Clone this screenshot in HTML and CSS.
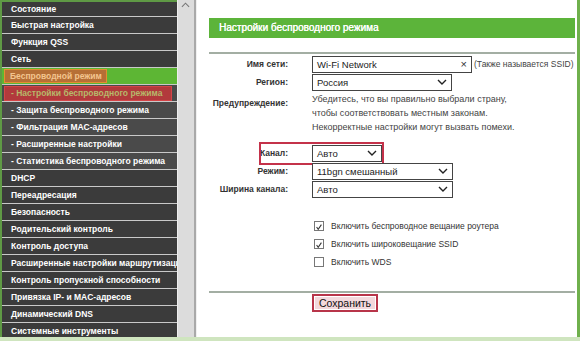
FILE: index.html
```html
<!DOCTYPE html>
<html lang="ru">
<head>
<meta charset="utf-8">
<link rel="stylesheet" href="styles.css">
</head>
<body>
<div class="page">
  <nav class="sidebar">
    <div class="item">Состояние</div>
    <div class="item">Быстрая настройка</div>
    <div class="item">Функция QSS</div>
    <div class="item">Сеть</div>
    <div class="item active"><span class="mark-orange">Беспроводной режим</span></div>
    <div class="item sub current"><span class="mark-red">- Настройки беспроводного режима</span></div>
    <div class="item sub">- Защита беспроводного режима</div>
    <div class="item sub">- Фильтрация MAC-адресов</div>
    <div class="item sub">- Расширенные настройки</div>
    <div class="item sub">- Статистика беспроводного режима</div>
    <div class="item">DHCP</div>
    <div class="item">Переадресация</div>
    <div class="item">Безопасность</div>
    <div class="item">Родительский контроль</div>
    <div class="item">Контроль доступа</div>
    <div class="item">Расширенные настройки маршрутизации</div>
    <div class="item">Контроль пропускной способности</div>
    <div class="item">Привязка IP- и MAC-адресов</div>
    <div class="item">Динамический DNS</div>
    <div class="item">Системные инструменты</div>
  </nav>
  <div class="scroll"><svg class="arrow" viewBox="0 0 10 6"><path d="M1 5l4-4 4 4" fill="none" stroke="#777" stroke-width="1.2"/></svg></div>
  <main class="content">
    <h1 class="title">Настройки беспроводного режима</h1>
    <div class="rule"></div>
    <div class="form">
      <div class="row">
        <label class="lbl">Имя сети:</label>
        <div class="ctl">
          <div class="input wide"><span>Wi-Fi Network</span><span class="x">×</span></div>
          <span class="note">(Также называется SSID)</span>
        </div>
      </div>
      <div class="row">
        <label class="lbl">Регион:</label>
        <div class="ctl"><div class="select s140"><span>Россия</span><svg class="chev" viewBox="0 0 10 6"><path d="M1 1l4 4 4-4" fill="none" stroke="#222" stroke-width="1.4"/></svg></div></div>
      </div>
      <div class="row warn">
        <label class="lbl">Предупреждение:</label>
        <div class="ctl warntext">Убедитесь, что вы правильно выбрали страну,<br>чтобы соответствовать местным законам.<br>Некорректные настройки могут вызвать помехи.</div>
      </div>
      <div class="row chan">
        <label class="lbl">Канал:</label>
        <div class="ctl"><div class="select s70"><span>Авто</span><svg class="chev" viewBox="0 0 10 6"><path d="M1 1l4 4 4-4" fill="none" stroke="#222" stroke-width="1.4"/></svg></div></div>
        <div class="hl"></div>
      </div>
      <div class="row">
        <label class="lbl">Режим:</label>
        <div class="ctl"><div class="select s141"><span>11bgn смешанный</span><svg class="chev" viewBox="0 0 10 6"><path d="M1 1l4 4 4-4" fill="none" stroke="#222" stroke-width="1.4"/></svg></div></div>
      </div>
      <div class="row">
        <label class="lbl">Ширина канала:</label>
        <div class="ctl"><div class="select s141"><span>Авто</span><svg class="chev" viewBox="0 0 10 6"><path d="M1 1l4 4 4-4" fill="none" stroke="#222" stroke-width="1.4"/></svg></div></div>
      </div>
      <div class="checks">
        <div class="check"><span class="box"><svg viewBox="0 0 10 10"><path d="M2 5l2 3 4-6" fill="none" stroke="#333" stroke-width="1.3"/></svg></span>Включить беспроводное вещание роутера</div>
        <div class="check"><span class="box"><svg viewBox="0 0 10 10"><path d="M2 5l2 3 4-6" fill="none" stroke="#333" stroke-width="1.3"/></svg></span>Включить широковещание SSID</div>
        <div class="check"><span class="box"></span>Включить WDS</div>
      </div>
    </div>
    <div class="rule bottom"></div>
    <div class="actions"><button class="save">Сохранить</button></div>
  </main>
</div>
<div class="footer"></div>
</body>
</html>
```
FILE: styles.css
```css
html, body { margin: 0; padding: 0; }
body {
  width: 580px; height: 341px; overflow: hidden;
  font-family: "Liberation Sans", Arial, sans-serif;
  background: #fff;
}
.page {
  display: flex;
  width: 580px;
  height: 337px;
}
.sidebar {
  width: 175px;
  flex: none;
  border-left: 2px solid #5f9a45;
  border-top: 2px solid #5f9a45;
  background: #3c3c3c;
  overflow: hidden;
}
.item {
  height: 16px;
  line-height: 16px;
  border-bottom: 1px solid #c9c9c9;
  color: #fff;
  font-weight: bold;
  font-size: 8.5px;
  padding-left: 9px;
  white-space: nowrap;
  background: #3b3b3b;
}
.item:first-child { height: 14px; line-height: 14px; }
.item.sub { background: #4a4a4a; }
.item.active {
  background: #5db634;
  padding-left: 2px;
}
.mark-orange {
  display: inline-block;
  height: 12px; line-height: 12px;
  margin-top: 1px;
  padding: 0 4px 0 5px;
  background: #b66f36;
  border: 1px solid #e3902e;
  color: #f3c58f;
}
.item.current {
  background: #4a4a4a;
  padding-left: 2px;
}
.mark-red {
  display: inline-block;
  width: 160px;
  height: 13px; line-height: 13px;
  margin-top: 1px;
  padding-left: 6px;
  background: #b23a3c;
  border: 1px solid #d44448;
  color: #b6b86a;
  overflow: hidden;
}
.scroll {
  width: 16px;
  flex: none;
  background: #dcdcdc;
  border-right: 2px solid #a9a9a9;
  border-left: 1px solid #eeeeee;
}
.arrow {
  display: block;
  width: 9px; height: 6px;
  margin: 2px 0 0 3px;
}
.content {
  flex: 1;
  min-width: 0;
  background: #fff;
  border-right: 3px solid #6fb04c;
  padding: 18px 0 0 12px;
  border-left: 1px solid #f0f0f0;
}
.title {
  margin: 0 2px 0 0;
  height: 20px;
  line-height: 20px;
  background: #5cb43a;
  color: #fff;
  font-size: 10px;
  font-weight: normal;
  text-shadow: 0.3px 0 0 #fff;
  padding-left: 10px;
}
.rule {
  height: 2px;
  background: #a3aea3;
  margin: 14px 2px 0 0;
}
.form { padding-top: 1px; }
.row {
  display: flex;
  align-items: center;
  height: 18px;
  position: relative;
}
.lbl {
  width: 79px;
  text-align: right;
  font-size: 8.5px;
  font-weight: bold;
  color: #333;
  flex: none;
}
.ctl {
  margin-left: 24px;
  display: flex;
  align-items: center;
  font-size: 9.5px;
  color: #333;
}
.input, .select {
  box-sizing: border-box;
  height: 17px;
  border: 1px solid #444;
  background: #fff;
  display: flex;
  align-items: center;
  justify-content: space-between;
  padding: 0 4px;
  font-size: 9.5px;
  color: #222;
}
.input.wide { width: 160px; }
.x { font-size: 11px; color: #333; }
.note { margin-left: 2px; font-size: 8.5px; color: #444; white-space: nowrap; }
.select.s140 { width: 140px; }
.select.s141 { width: 141px; }
.select.s70 { width: 70px; }
.chev { width: 10px; height: 6px; }
.row.warn {
  height: auto;
  align-items: flex-start;
  margin-top: 1px;
}
.row.warn .lbl { margin-top: 6px; }
.warntext {
  font-size: 9px;
  line-height: 14px;
  color: #444;
  display: block;
}
.row.chan { margin-top: 10px; }
.hl {
  position: absolute;
  left: 50px; top: -2px;
  width: 121px; height: 19px;
  border: 2px solid #c4324a;
  pointer-events: none;
}
.checks {
  margin: 22px 0 0 105px;
  display: flex;
  flex-direction: column;
  gap: 7px;
}
.check {
  display: flex;
  align-items: center;
  font-size: 8.5px;
  color: #333;
  height: 11px;
}
.box {
  width: 10px; height: 10px;
  box-sizing: border-box;
  border: 1px solid #777;
  background: #fff;
  margin-right: 7px;
  display: inline-flex;
}
.box svg { width: 10px; height: 10px; }
.rule.bottom { margin-top: 24px; }
.actions { padding: 0 0 0 103px; }
.save {
  font-family: "Liberation Sans", Arial, sans-serif;
  font-size: 10.5px;
  color: #111;
  height: 18px;
  width: 66px;
  padding: 0;
  background: #f3d8dc;
  border: 2px solid #b8354a;
  box-shadow: inset 0 0 0 1px #fff;
}
.footer {
  height: 4px;
  background: #cfe5bf;
}
```
